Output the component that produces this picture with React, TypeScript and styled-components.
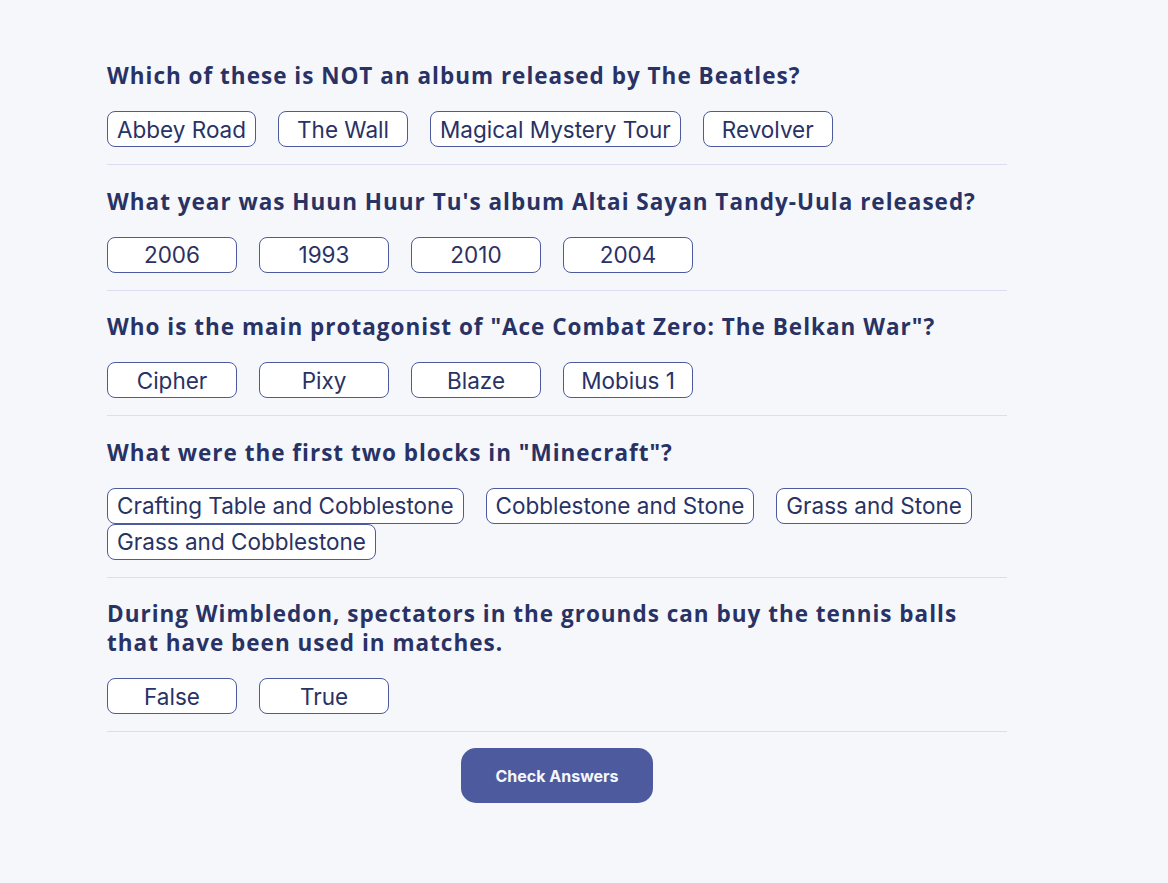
import React from "react";
import styled, { createGlobalStyle } from "styled-components";

const GlobalStyle = createGlobalStyle`
  html, body { margin: 0; padding: 0; background: #F5F7FB; }
  body { font-family: Inter, "Noto Sans", sans-serif; }
`;

const Page = styled.main`
  box-sizing: border-box;
  width: 900px;
  margin-left: 107px;
  padding-top: 39.5px;
  padding-bottom: 40px;
  display: flex;
  flex-direction: column;
`;

const QuestionBlock = styled.section`
  padding: 21.5px 0 17px;
  border-bottom: 1px solid #DBDEF0;
`;

const Question = styled.h2`
  margin: 0 0 21px;
  font-family: "Open Sans", Lato, sans-serif;
  font-weight: 700;
  font-size: 22.5px;
  letter-spacing: 1px;
  line-height: 29px;
  color: #293264;
  max-width: 900px;
`;

const Answers = styled.div`
  display: flex;
  flex-wrap: wrap;
  column-gap: 22px;
  row-gap: 0;
`;

const Answer = styled.button`
  box-sizing: border-box;
  min-width: 130px;
  height: 36px;
  padding: 1px 9px 0;
  border: 1px solid #4D5B9E;
  border-radius: 8px;
  background: #FFFFFF;
  color: #293264;
  font-family: Inter, sans-serif;
  font-size: 22.5px;
  line-height: 26px;
  cursor: pointer;
`;

const CheckButton = styled.button`
  align-self: center;
  margin-top: 16px;
  width: 192px;
  height: 55px;
  border: none;
  border-radius: 15px;
  background: #4D5B9E;
  color: #F5F7FB;
  font-family: Inter, sans-serif;
  font-weight: 700;
  font-size: 16px;
  cursor: pointer;
`;

const quiz = [
  {
    q: "Which of these is NOT an album released by The Beatles?",
    a: ["Abbey Road", "The Wall", "Magical Mystery Tour", "Revolver"],
  },
  {
    q: "What year was Huun Huur Tu's album Altai Sayan Tandy-Uula released?",
    a: ["2006", "1993", "2010", "2004"],
  },
  {
    q: "Who is the main protagonist of \"Ace Combat Zero: The Belkan War\"?",
    a: ["Cipher", "Pixy", "Blaze", "Mobius 1"],
  },
  {
    q: "What were the first two blocks in \"Minecraft\"?",
    a: [
      "Crafting Table and Cobblestone",
      "Cobblestone and Stone",
      "Grass and Stone",
      "Grass and Cobblestone",
    ],
  },
  {
    q: "During Wimbledon, spectators in the grounds can buy the tennis balls that have been used in matches.",
    a: ["False", "True"],
  },
];

export default function App() {
  return (
    <>
      <GlobalStyle />
      <Page>
        {quiz.map((item) => (
          <QuestionBlock key={item.q}>
            <Question>{item.q}</Question>
            <Answers>
              {item.a.map((ans) => (
                <Answer key={ans}>{ans}</Answer>
              ))}
            </Answers>
          </QuestionBlock>
        ))}
        <CheckButton>Check Answers</CheckButton>
      </Page>
    </>
  );
}
